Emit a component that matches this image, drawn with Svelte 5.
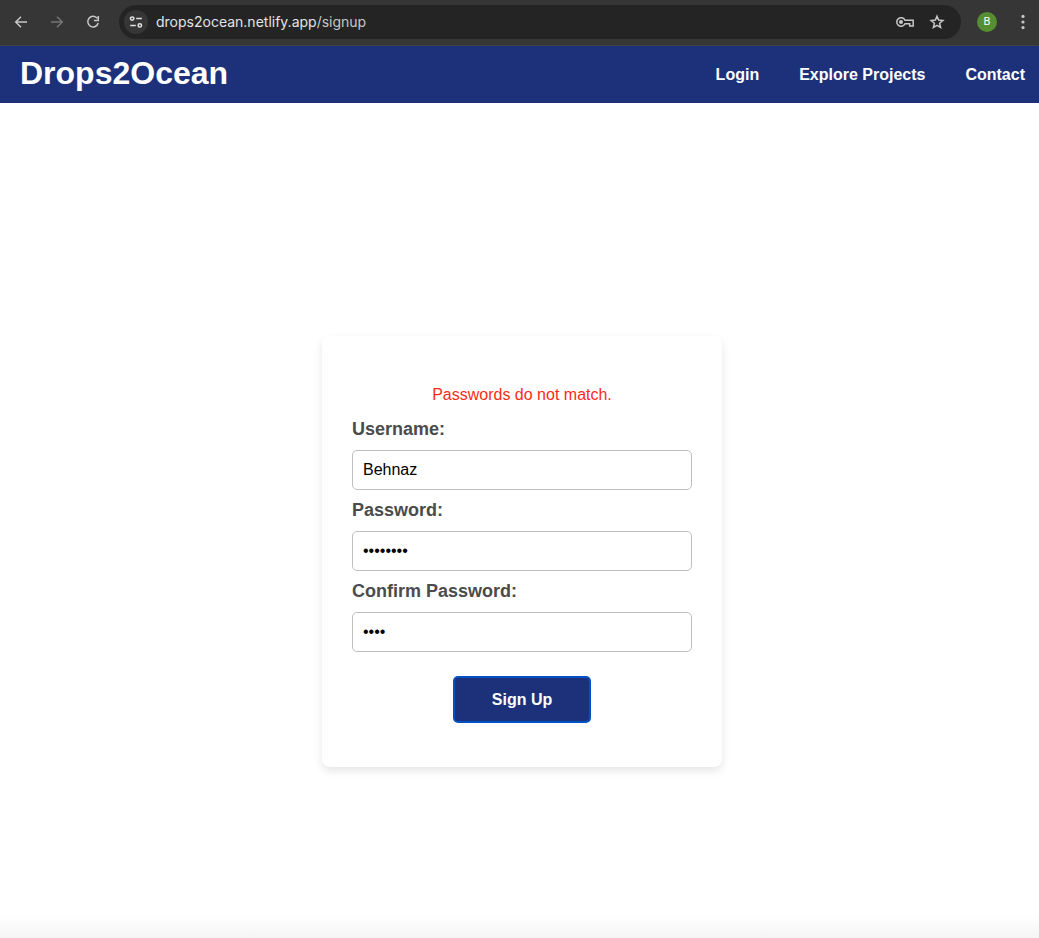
<script>
  let username = $state('Behnaz');
  let password = $state('password');
  let confirmation = $state('pass');
  let error = $state('Passwords do not match.');

  function submit(event) {
    event.preventDefault();
    error = password === confirmation ? '' : 'Passwords do not match.';
  }
</script>

<div class="window">
  <div class="toolbar">
    <button class="tool" aria-label="Back">
      <svg width="16" height="16" viewBox="0 0 16 16"><path d="M14 8H3M8 2.7 2.7 8 8 13.3" /></svg>
    </button>
    <button class="tool" aria-label="Forward" disabled>
      <svg width="16" height="16" viewBox="0 0 16 16"><path d="M2 8h11M8 2.7 13.3 8 8 13.3" /></svg>
    </button>
    <button class="tool" aria-label="Reload">
      <svg width="16" height="16" viewBox="0 0 16 16"><path d="M12.3 4.4A5.3 5.3 0 1 0 13.2 9M13.3 2v4.4H8.9" /></svg>
    </button>
    <div class="address">
      <button class="site" aria-label="Site information">
        <svg width="14" height="14" viewBox="0 0 14 14"><circle cx="3.2" cy="3.6" r="1.7" /><circle cx="10.8" cy="10.4" r="1.7" /><path d="M7.2 3.6h5.6M1.2 10.4h5.6" /></svg>
      </button>
      <span class="url">drops2ocean.netlify.app<span class="path">/signup</span></span>
      <button class="tool" aria-label="Passwords">
        <svg width="20" height="16" viewBox="0 0 20 16"><path d="M10 6.3A4.3 4.3 0 1 0 10 9.7h4.7v2.3h3.5V6.3Z" /><circle class="solid" cx="6" cy="8" r="2" /></svg>
      </button>
      <button class="tool" aria-label="Bookmark">
        <svg width="16" height="16" viewBox="0 0 16 16"><path d="m8 2.2 1.6 3.9 4.3.4-3.3 2.8 1 4.2L8 11.3l-3.6 2.2 1-4.2-3.3-2.8 4.3-.4Z" /></svg>
      </button>
    </div>
    <button class="avatar" aria-label="Profile B">B</button>
    <button class="tool" aria-label="Menu">
      <svg width="16" height="16" viewBox="0 0 16 16"><g class="solid"><circle cx="8" cy="2.4" r="1.6" /><circle cx="8" cy="8" r="1.6" /><circle cx="8" cy="13.6" r="1.6" /></g></svg>
    </button>
  </div>

  <header>
    <h1>Drops2Ocean</h1>
    <nav>
      <a href="#login">Login</a>
      <a href="#projects">Explore Projects</a>
      <a href="#contact">Contact</a>
    </nav>
  </header>

  <main>
    <form onsubmit={submit}>
      <p role="alert">{error}</p>
      <label for="username">Username:</label>
      <input id="username" type="text" autocomplete="off" bind:value={username} />
      <label for="password">Password:</label>
      <input id="password" type="password" autocomplete="off" bind:value={password} />
      <label for="confirmation">Confirm Password:</label>
      <input id="confirmation" type="password" autocomplete="off" bind:value={confirmation} />
      <button class="submit" type="submit">Sign Up</button>
    </form>
  </main>
  <div class="fade"></div>
</div>

<style>
  :global(body) {
    margin: 0;
    background: #fff;
    font-family: "Liberation Sans", Arial, sans-serif;
    font-size: 16px;
  }
  .window {
    display: flex;
    flex-direction: column;
    min-height: 100vh;
  }
  .toolbar {
    display: flex;
    align-items: center;
    gap: 12px;
    box-sizing: border-box;
    height: 46px;
    padding: 0 4px 2px 9px;
    background: #363636;
    border-bottom: 1px solid #414141;
  }
  button {
    font: inherit;
    border: 0;
    cursor: pointer;
  }
  .tool,
  .site,
  .avatar {
    display: flex;
    flex: none;
    align-items: center;
    justify-content: center;
    width: 24px;
    height: 24px;
    padding: 0;
    color: #c7c7c7;
    background: none;
    border-radius: 50%;
  }
  .tool:disabled {
    color: #757575;
  }
  svg {
    fill: none;
    stroke: currentColor;
    stroke-width: 1.5;
  }
  .solid {
    fill: currentColor;
    stroke: none;
  }
  .address {
    display: flex;
    flex: 1;
    align-items: center;
    gap: 8px;
    box-sizing: border-box;
    height: 34px;
    margin-left: 2px;
    padding: 0 12px 0 5px;
    background: #242424;
    border-radius: 17px;
  }
  .site {
    color: #e3e3e3;
    background: #363636;
  }
  .url {
    flex: 1;
    font-family: Inter, sans-serif;
    font-size: 14px;
    color: #e3e3e3;
  }
  .path {
    color: #c7c7c7;
  }
  .avatar {
    width: 20px;
    height: 20px;
    margin: 0 2px 0 4px;
    font-family: Roboto, sans-serif;
    font-size: 11px;
    color: #fff;
    background: #568f32;
  }
  header {
    display: flex;
    align-items: center;
    justify-content: space-between;
    height: 57px;
    padding: 0 14px 0 20px;
    color: #fff;
    background: #1d317b;
  }
  h1 {
    margin: 0 0 3px;
    font-size: 32px;
    line-height: 36px;
  }
  nav {
    display: flex;
    gap: 40px;
  }
  a {
    font-weight: bold;
    color: inherit;
    text-decoration: none;
  }
  main {
    display: flex;
    flex: 1;
    align-items: center;
    justify-content: center;
    padding: 86px 0 0 5px;
  }
  form {
    display: flex;
    flex-direction: column;
    box-sizing: border-box;
    width: 100%;
    max-width: 400px;
    padding: 48px 30px 44px;
    background: #fff;
    border-radius: 8px;
    box-shadow: 0 4px 8px rgba(0, 0, 0, 0.1);
  }
  p {
    min-height: 22px;
    margin: 0 0 12px;
    line-height: 22px;
    text-align: center;
    color: #fb2c16;
  }
  label {
    margin-bottom: 10px;
    font-size: 18px;
    font-weight: bold;
    line-height: 22px;
    color: #4b4b4b;
  }
  input {
    box-sizing: border-box;
    width: 100%;
    height: 40px;
    margin: 0 0 9px;
    padding: 0 10px;
    font: inherit;
    color: #000;
    background: #fff;
    border: 1px solid #bfbfbf;
    border-radius: 5px;
  }
  .submit {
    align-self: center;
    height: 47px;
    margin-top: 15px;
    padding: 0 37px;
    font-weight: bold;
    color: #fff;
    background: #1d317b;
    border: 2px solid #0052c4;
    border-radius: 5px;
  }
  .fade {
    height: 24px;
    background: linear-gradient(#fff, #f5f5f5);
  }
</style>
